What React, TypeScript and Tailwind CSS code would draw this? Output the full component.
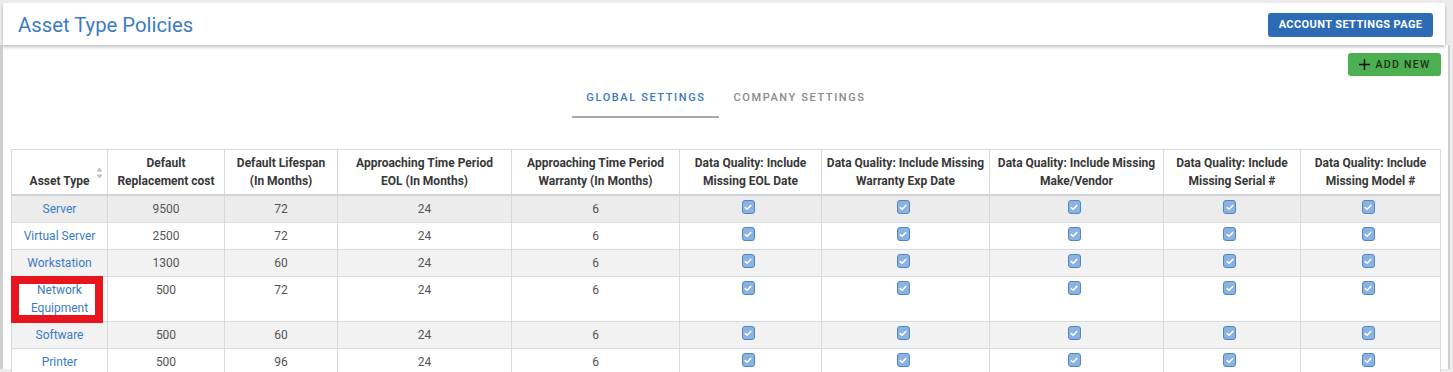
import React from "react";

const cols = [96, 117, 113, 174, 168, 142, 168, 174, 137, 140];

const headers: string[][] = [
  ["Asset Type"],
  ["Default", "Replacement cost"],
  ["Default Lifespan", "(In Months)"],
  ["Approaching Time Period", "EOL (In Months)"],
  ["Approaching Time Period", "Warranty (In Months)"],
  ["Data Quality: Include", "Missing EOL Date"],
  ["Data Quality: Include Missing", "Warranty Exp Date"],
  ["Data Quality: Include Missing", "Make/Vendor"],
  ["Data Quality: Include", "Missing Serial #"],
  ["Data Quality: Include", "Missing Model #"],
];

const rows = [
  { name: ["Server"], cost: "9500", life: "72", eol: "24", war: "6", bg: "bg-[#ececec]" },
  { name: ["Virtual Server"], cost: "2500", life: "72", eol: "24", war: "6", bg: "bg-white" },
  { name: ["Workstation"], cost: "1300", life: "60", eol: "24", war: "6", bg: "bg-[#f2f2f2]" },
  { name: ["Network", "Equipment"], cost: "500", life: "72", eol: "24", war: "6", bg: "bg-white", mark: true },
  { name: ["Software"], cost: "500", life: "60", eol: "24", war: "6", bg: "bg-[#f2f2f2]" },
  { name: ["Printer"], cost: "500", life: "96", eol: "24", war: "6", bg: "bg-white" },
];

function Check() {
  return (
    <span className="inline-flex w-[13px] h-[14px] mr-[5px] rounded-[3px] border border-[#4f86c8] bg-[#8cb2df] items-center justify-center align-middle">
      <svg width="8" height="7" viewBox="0 0 8 7">
        <path d="M1.2 3.6 L3.1 5.3 L6.8 1.4" fill="none" stroke="#ffffff" strokeWidth="1.5" strokeLinecap="round" strokeLinejoin="round" />
      </svg>
    </span>
  );
}

export default function App() {
  return (
    <div className="w-[1453px] h-[372px] overflow-hidden bg-[#ececec] font-['Roboto','Liberation_Sans',sans-serif] relative">
      <div className="pt-[3px] flex flex-col">
        <div className="relative z-10 ml-[3px] w-[1442px] h-[42px] bg-white shadow-[0_2px_3px_rgba(0,0,0,0.25)] flex items-center justify-between pl-[15px] pr-[12px]">
          <div className="text-[20.3px] leading-[24px] text-[#3c7bc6] mt-[1px]">Asset Type Policies</div>
          <button className="h-[24px] w-[165px] rounded-[3px] bg-[#2d6cb4] text-white text-[11px] font-bold tracking-[0.4px] flex items-center justify-center mt-[2px]">
            ACCOUNT SETTINGS PAGE
          </button>
        </div>
        <div className="w-[1450px] h-[324px] bg-white border-l-[3px] border-r-[2px] border-[#cfcfcf] flex flex-col">
          <div className="flex justify-end pr-[7px] pt-[8px]">
            <button className="h-[23px] w-[93px] rounded-[3px] bg-[#4caf50] text-[#1c2e1c] text-[10.5px] font-medium tracking-[1.3px] flex items-center justify-center gap-[4px]">
              <svg width="13" height="13" viewBox="0 0 13 13">
                <path d="M6.5 1 V12 M1 6.5 H12" stroke="#111" strokeWidth="1.5" />
              </svg>
              ADD NEW
            </button>
          </div>
          <div className="flex justify-center mt-[2px] pl-[1px]">
            <div className="flex">
              <div className="px-[14px] pt-[13px] pb-[11px] border-b-[2px] border-[#a9a9a9] text-[11px] leading-[14px] font-medium tracking-[1.6px] text-[#3a78c3]">
                GLOBAL SETTINGS
              </div>
              <div className="px-[14px] pt-[13px] pb-[11px] border-b-[2px] border-transparent text-[11px] leading-[14px] font-medium tracking-[1.6px] text-[#8a8a8a]">
                COMPANY SETTINGS
              </div>
            </div>
          </div>
          <div className="ml-[8px] mt-[31px]">
            <table className="table-fixed border-collapse w-[1429px] text-[12px] leading-[18px]">
              <colgroup>
                {cols.map((w, i) => (
                  <col key={i} style={{ width: w }} />
                ))}
              </colgroup>
              <thead>
                <tr>
                  {headers.map((h, i) => (
                    <th
                      key={i}
                      className="relative align-bottom text-center font-bold text-[#383838] px-[4px] pt-[4px] pb-[4px] border border-[#d6d9dd] border-b-[2px] border-b-[#d0d3d7]"
                    >
                      {h.map((l, j) => (
                        <div key={j}>{l}</div>
                      ))}
                      {i === 0 && (
                        <svg className="absolute right-[4px] top-[17px]" width="7" height="12" viewBox="0 0 7 12">
                          <path d="M3.5 0.5 L6.5 4.5 H0.5 Z" fill="#bdbdbd" />
                          <path d="M3.5 11.5 L6.5 7.5 H0.5 Z" fill="#bdbdbd" />
                        </svg>
                      )}
                    </th>
                  ))}
                </tr>
              </thead>
              <tbody>
                {rows.map((r, i) => (
                  <tr key={i} className={r.bg}>
                    <td className="relative align-top text-center text-[#3a7bc5] px-[4px] py-[4px] border border-[#d6d9dd]">
                      {r.name.map((l, j) => (
                        <div key={j}>{l}</div>
                      ))}
                      {r.mark && (
                        <div className="absolute left-[-1px] top-[-1px] w-[92px] h-[47px] border-[8px] border-[#e8151f]" />
                      )}
                    </td>
                    {[r.cost, r.life, r.eol, r.war].map((v, j) => (
                      <td key={j} className="align-top text-center text-[#555] px-[4px] py-[4px] border border-[#d6d9dd]">
                        {v}
                      </td>
                    ))}
                    {[0, 1, 2, 3, 4].map((j) => (
                      <td key={j} className="align-top text-center px-[4px] pt-[4px] pb-[4px] border border-[#d6d9dd]">
                        <div className="h-[18px] flex items-start justify-center">
                          <Check />
                        </div>
                      </td>
                    ))}
                  </tr>
                ))}
              </tbody>
            </table>
          </div>
        </div>
      </div>
    </div>
  );
}
